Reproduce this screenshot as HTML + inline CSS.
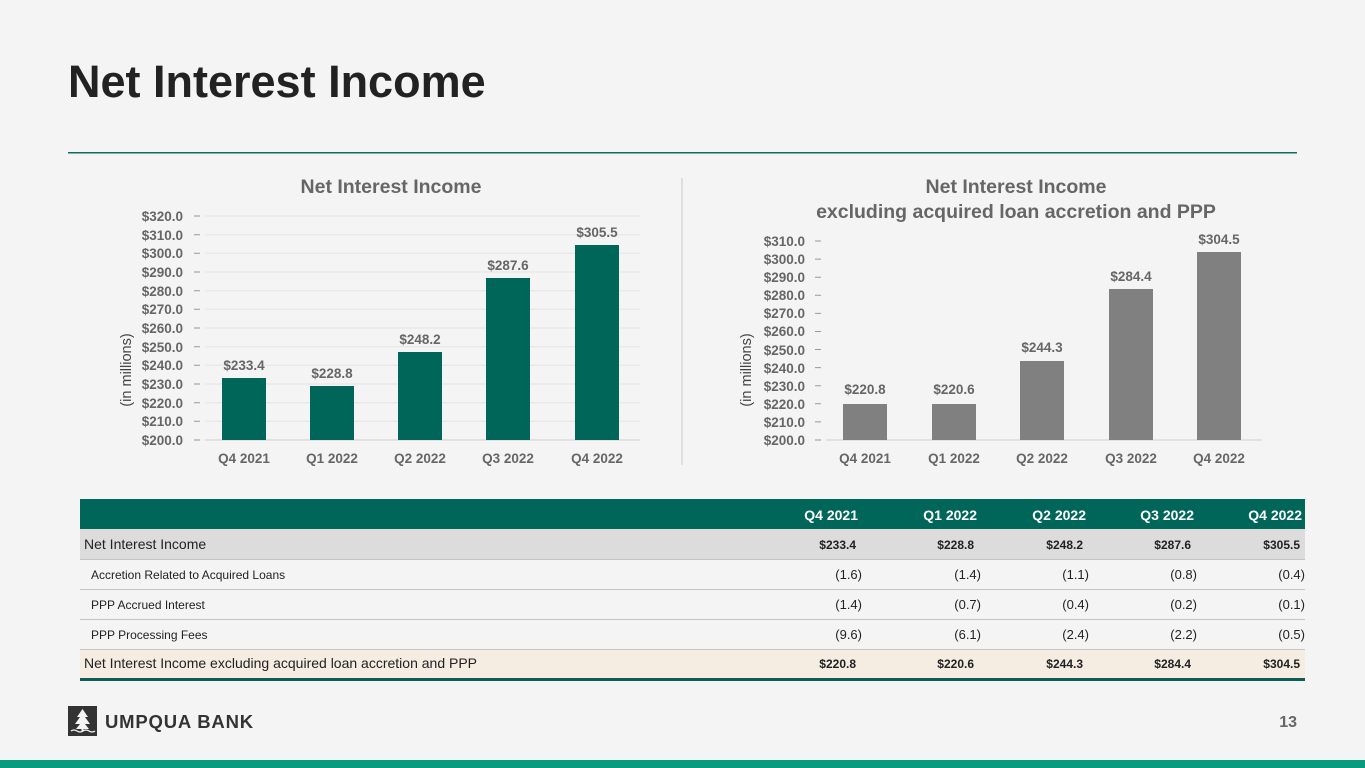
<!DOCTYPE html>
<html><head><meta charset="utf-8"><style>
body{margin:0;background:#f4f4f4;font-family:"Liberation Sans",Arial,sans-serif;}
svg{display:block}
</style></head><body>
<svg width="1365" height="768" viewBox="0 0 1365 768" font-family="Liberation Sans, Arial, sans-serif">
<rect width="1365" height="768" fill="#f4f4f4"/>
<text x="68" y="97" font-size="45" font-weight="bold" fill="#222">Net Interest Income</text>
<rect x="68" y="152" width="1229" height="1.5" fill="#0e6b60"/>
<line x1="682" y1="178" x2="682" y2="465" stroke="#d8d8d8" stroke-width="1.5"/>

<!-- Left chart -->
<text x="391" y="193" font-size="19.5" font-weight="bold" fill="#666" text-anchor="middle">Net Interest Income</text>
<g font-size="13.5" font-weight="bold" fill="#666" text-anchor="end">
<text x="183" y="445">$200.0</text><text x="183" y="426">$210.0</text><text x="183" y="408">$220.0</text><text x="183" y="389">$230.0</text><text x="183" y="370">$240.0</text><text x="183" y="352">$250.0</text><text x="183" y="333">$260.0</text><text x="183" y="314">$270.0</text><text x="183" y="296">$280.0</text><text x="183" y="277">$290.0</text><text x="183" y="258">$300.0</text><text x="183" y="240">$310.0</text><text x="183" y="221">$320.0</text>
</g>
<g stroke="#999" stroke-width="1">
<path d="M194 440h6M194 421.3h6M194 402.7h6M194 384h6M194 365.3h6M194 346.7h6M194 328h6M194 309.3h6M194 290.7h6M194 272h6M194 253.3h6M194 234.7h6M194 216h6"/>
</g>
<g stroke="#e4e4e4" stroke-width="1">
<path d="M205 421.3h435M205 402.7h435M205 384h435M205 365.3h435M205 346.7h435M205 328h435M205 309.3h435M205 290.7h435M205 272h435M205 253.3h435M205 234.7h435M205 216h435"/>
</g>
<line x1="205" y1="440" x2="640" y2="440" stroke="#d0d0d0"/>
<g fill="#00665a">
<rect x="222" y="378" width="44" height="62"/><rect x="310" y="386" width="44" height="54"/><rect x="398" y="352" width="44" height="88"/><rect x="486" y="278" width="44" height="162"/><rect x="575" y="245" width="44" height="195"/>
</g>
<g font-size="13.5" font-weight="bold" fill="#666" text-anchor="middle">
<text x="244" y="370">$233.4</text><text x="332" y="378">$228.8</text><text x="420" y="344">$248.2</text><text x="508" y="270">$287.6</text><text x="597" y="237">$305.5</text>
<text x="244" y="463">Q4 2021</text><text x="332" y="463">Q1 2022</text><text x="420" y="463">Q2 2022</text><text x="508" y="463">Q3 2022</text><text x="597" y="463">Q4 2022</text>
</g>
<text transform="translate(131,370) rotate(-90)" font-size="14.5" fill="#444" text-anchor="middle">(in millions)</text>

<!-- Right chart -->
<text x="1016" y="193" font-size="19.5" font-weight="bold" fill="#666" text-anchor="middle">Net Interest Income</text>
<text x="1016" y="218" font-size="19.5" font-weight="bold" fill="#666" text-anchor="middle">excluding acquired loan accretion and PPP</text>
<g font-size="13.5" font-weight="bold" fill="#666" text-anchor="end">
<text x="805" y="445">$200.0</text><text x="805" y="427">$210.0</text><text x="805" y="409">$220.0</text><text x="805" y="391">$230.0</text><text x="805" y="373">$240.0</text><text x="805" y="355">$250.0</text><text x="805" y="336">$260.0</text><text x="805" y="318">$270.0</text><text x="805" y="300">$280.0</text><text x="805" y="282">$290.0</text><text x="805" y="264">$300.0</text><text x="805" y="246">$310.0</text>
</g>
<g stroke="#999" stroke-width="1">
<path d="M815 440h6M815 421.9h6M815 403.8h6M815 385.7h6M815 367.6h6M815 349.5h6M815 331.5h6M815 313.4h6M815 295.3h6M815 277.2h6M815 259.1h6M815 241h6"/>
</g>
<line x1="826" y1="440" x2="1262" y2="440" stroke="#d0d0d0"/>
<g fill="#808080">
<rect x="843" y="404" width="44" height="36"/><rect x="932" y="404" width="44" height="36"/><rect x="1020" y="361" width="44" height="79"/><rect x="1109" y="289" width="44" height="151"/><rect x="1197" y="252" width="44" height="188"/>
</g>
<g font-size="13.5" font-weight="bold" fill="#666" text-anchor="middle">
<text x="865" y="394">$220.8</text><text x="954" y="394">$220.6</text><text x="1042" y="352">$244.3</text><text x="1131" y="281">$284.4</text><text x="1219" y="244">$304.5</text>
<text x="865" y="463">Q4 2021</text><text x="954" y="463">Q1 2022</text><text x="1042" y="463">Q2 2022</text><text x="1131" y="463">Q3 2022</text><text x="1219" y="463">Q4 2022</text>
</g>
<text transform="translate(751,370) rotate(-90)" font-size="14.5" fill="#444" text-anchor="middle">(in millions)</text>

<!-- Table -->
<rect x="80" y="499" width="1225" height="30" fill="#00665a"/>
<g font-size="14" font-weight="bold" fill="#fff" text-anchor="end">
<text x="858" y="520">Q4 2021</text><text x="977" y="520">Q1 2022</text><text x="1086" y="520">Q2 2022</text><text x="1194" y="520">Q3 2022</text><text x="1302" y="520">Q4 2022</text>
</g>
<rect x="80" y="529" width="1225" height="30" fill="#dcdcdc"/>
<rect x="80" y="559" width="1225" height="1" fill="#c4c4c4"/>
<rect x="80" y="589" width="1225" height="1" fill="#c4c4c4"/>
<rect x="80" y="619" width="1225" height="1" fill="#c4c4c4"/>
<rect x="80" y="649" width="1225" height="29" fill="#f5ece2"/>
<rect x="80" y="649" width="1225" height="1" fill="#c4c4c4"/>
<rect x="80" y="678" width="1225" height="3" fill="#0e5c55"/>
<g font-size="14" fill="#222">
<text x="84" y="549">Net Interest Income</text>
<text x="84" y="668">Net Interest Income excluding acquired loan accretion and PPP</text>
</g>
<g font-size="12" fill="#222">
<text x="91" y="579">Accretion Related to Acquired Loans</text>
<text x="91" y="609">PPP Accrued Interest</text>
<text x="91" y="639">PPP Processing Fees</text>
</g>
<g font-size="12" font-weight="bold" fill="#222" text-anchor="end">
<text x="856" y="549">$233.4</text><text x="974" y="549">$228.8</text><text x="1083" y="549">$248.2</text><text x="1191" y="549">$287.6</text><text x="1300" y="549">$305.5</text>
<text x="856" y="668">$220.8</text><text x="974" y="668">$220.6</text><text x="1083" y="668">$244.3</text><text x="1191" y="668">$284.4</text><text x="1300" y="668">$304.5</text>
</g>
<g font-size="13" fill="#222" text-anchor="end">
<text x="862" y="579">(1.6)</text><text x="981" y="579">(1.4)</text><text x="1089" y="579">(1.1)</text><text x="1197" y="579">(0.8)</text><text x="1305" y="579">(0.4)</text>
<text x="862" y="609">(1.4)</text><text x="981" y="609">(0.7)</text><text x="1089" y="609">(0.4)</text><text x="1197" y="609">(0.2)</text><text x="1305" y="609">(0.1)</text>
<text x="862" y="639">(9.6)</text><text x="981" y="639">(6.1)</text><text x="1089" y="639">(2.4)</text><text x="1197" y="639">(2.2)</text><text x="1305" y="639">(0.5)</text>
</g>

<!-- Logo -->
<rect x="68" y="706" width="29" height="30" fill="#333"/>
<path d="M82.5 709 L77 717 L80 717 L75 724 L80 724 L76 729 L89 729 L85 724 L90 724 L85 717 L88 717 Z" fill="#f4f4f4"/>
<rect x="81.5" y="728" width="2" height="3" fill="#f4f4f4"/>
<path d="M71 731 q3 -2 6 0 t6 0 t6 0 t6 0" stroke="#f4f4f4" stroke-width="1.3" fill="none"/>
<text x="105" y="728" font-size="18.5" font-weight="bold" fill="#333" letter-spacing="0.8">UMPQUA BANK</text>
<text x="1297" y="727" font-size="16" font-weight="bold" fill="#666" text-anchor="end">13</text>
<rect x="0" y="760" width="1365" height="8" fill="#0a9a7e"/>
</svg>
</body></html>
